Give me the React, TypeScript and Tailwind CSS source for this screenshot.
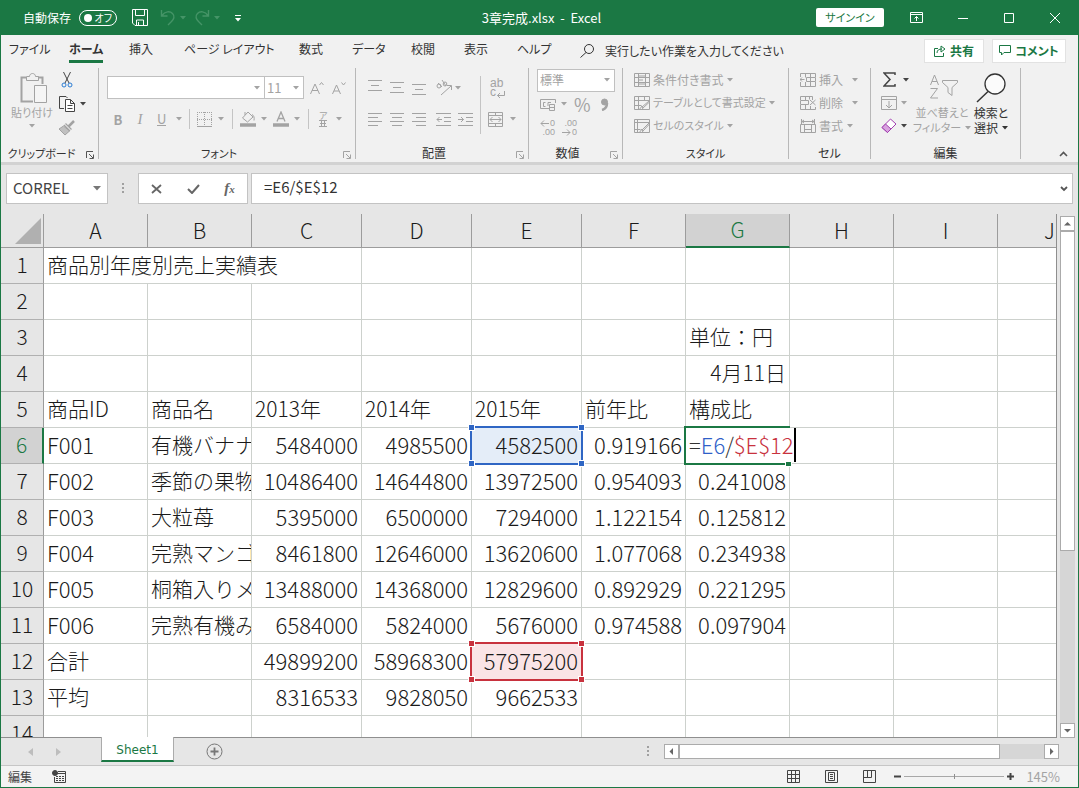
import { Fragment, type ReactNode } from "react";
import clsx from "clsx";

type IconProps = { w?: number; h?: number; className?: string; children: ReactNode };

function Icon({ w = 16, h = 16, className, children }: IconProps) {
  return (
    <svg
      width={w}
      height={h}
      viewBox={`0 0 ${w} ${h}`}
      fill="none"
      stroke="currentColor"
      className={clsx("shrink-0", className)}
      aria-hidden
    >
      {children}
    </svg>
  );
}

function Caret({ className }: { className?: string }) {
  return (
    <Icon w={6} h={4} className={className}>
      <path d="M0 0h6L3 3.5z" fill="currentColor" stroke="none" />
    </Icon>
  );
}

function Launcher({ className }: { className?: string }) {
  return (
    <button type="button" aria-label="詳細" className={clsx("absolute right-1 bottom-0", className)}>
      <Icon w={8} h={8}>
        <path d="M.5 7V.5H7M3 3l4 4M7.5 3.5v4h-4" />
      </Icon>
    </button>
  );
}

function Sep({ className }: { className?: string }) {
  return <span className={clsx("w-px bg-[#c4c4c4]", className)} />;
}

const tabs = [
  { label: "ファイル", width: "w-[60px]" },
  { label: "ホーム", width: "w-[60px]", active: true },
  { label: "挿入", width: "w-[55px]" },
  { label: "ページ レイアウト", width: "w-[115px]" },
  { label: "数式", width: "w-[53px]" },
  { label: "データ", width: "w-[59px]" },
  { label: "校閲", width: "w-[53px]" },
  { label: "表示", width: "w-[53px]" },
  { label: "ヘルプ", width: "w-[63px]" },
];

function TitleBar() {
  return (
    <header className="flex h-[35px] shrink-0 items-center bg-[#1b7844] text-xs text-white">
      <div className="flex flex-1 basis-0 items-center pl-[22px]">
        <span>自動保存</span>
        <button
          type="button"
          role="switch"
          aria-checked="false"
          aria-label="自動保存"
          className="ml-2 flex h-4 w-[38px] items-center justify-between rounded-full border border-white pr-1 pl-1 text-[10px] leading-none"
        >
          <span className="size-2 rounded-full bg-white" />
          オフ
        </button>
        <button type="button" aria-label="上書き保存" className="ml-[15px]">
          <Icon w={16} h={17}>
            <path d="M.5.5h15v16H3L.5 14zM3.5.5v6h9v-6M4.5 16v-5h7v5M6.5 13v3" />
          </Icon>
        </button>
        <button type="button" aria-label="元に戻す" className="ml-3 flex items-center gap-1 text-[#459467]">
          <Icon w={16} h={17}>
            <path d="M1.500 1v6h6M2 6.500C5 2 10 2 12.500 4.500c3 3 1 6-1 8L8 16" strokeWidth="1.400" />
          </Icon>
          <Caret />
        </button>
        <button type="button" aria-label="やり直し" className="ml-2 flex items-center gap-1 text-[#459467]">
          <Icon w={16} h={17}>
            <path d="M14.500 1v6h-6M14 6.500C11 2 6 2 3.500 4.500c-3 3-1 6 1 8L8 16" strokeWidth="1.400" />
          </Icon>
          <Caret />
        </button>
        <button type="button" aria-label="クイック アクセス ツール バー" className="ml-[15px]">
          <Icon w={6} h={8}>
            <path d="M0 1.500h6" />
            <path d="M0 4h6L3 7.500z" fill="currentColor" stroke="none" />
          </Icon>
        </button>
      </div>
      <h1 className="text-[13px] whitespace-pre">3章完成.xlsx  -  Excel</h1>
      <div className="flex flex-1 basis-0 items-center justify-end pr-[18px]">
        <button type="button" className="h-[19px] w-[68px] rounded-xs bg-white text-[11px] leading-none text-[#1b7844]">
          サインイン
        </button>
        <button type="button" aria-label="リボンの表示オプション" className="ml-[26px]">
          <Icon w={13} h={11}>
            <path d="M.5.5h12v10H.5zM.5 2.500h12M6.500 9V4.500M4.500 6.500l2-2 2 2" />
          </Icon>
        </button>
        <button type="button" aria-label="最小化" className="ml-[35px]">
          <Icon w={10} h={10}>
            <path d="M0 5.500h10" />
          </Icon>
        </button>
        <button type="button" aria-label="最大化" className="ml-9">
          <Icon w={10} h={10}>
            <path d="M.5.5h9v9h-9z" />
          </Icon>
        </button>
        <button type="button" aria-label="閉じる" className="ml-9">
          <Icon w={10} h={10}>
            <path d="M0 0l10 10M10 0L0 10" />
          </Icon>
        </button>
      </div>
    </header>
  );
}

function MenuTabs() {
  return (
    <nav className="flex h-[31px] shrink-0 items-center pr-3 pl-2 text-xs text-[#333]">
      {tabs.map((tab) => (
        <div key={tab.label} className={clsx("flex shrink-0", tab.width)}>
          <button
            type="button"
            className={clsx(
              "h-6 border-b-3 whitespace-nowrap",
              tab.active ? "border-[#1b7844] font-bold" : "border-transparent",
            )}
          >
            {tab.label}
          </button>
        </div>
      ))}
      <label className="flex flex-1 items-center gap-[11px]">
        <Icon w={14} h={14}>
          <circle cx="9" cy="5" r="4.500" />
          <path d="M6 8.500L.5 13.500" />
        </Icon>
        <input
          className="w-full min-w-0 outline-none placeholder:text-[#333]"
          placeholder="実行したい作業を入力してください"
        />
      </label>
      <button
        type="button"
        className="flex h-6 w-[60px] items-center justify-center gap-1 border border-[#e2e2e2] bg-white text-xs font-bold text-[#1b7844]"
      >
        <Icon w={12} h={12}>
          <path d="M4 3.500H.5v8h9V8M3 8c0-3 2-4 5-4M7 1l4 3-4 3z" />
        </Icon>
        共有
      </button>
      <button
        type="button"
        className="ml-2 flex h-6 w-[74px] items-center justify-center gap-1 border border-[#e2e2e2] bg-white text-xs font-bold text-[#1b7844]"
      >
        <Icon w={12} h={11}>
          <path d="M.5.5h11v7H5L2.500 10V7.500h-2z" />
        </Icon>
        コメント
      </button>
    </nav>
  );
}

type GroupProps = { label: string; width: string; small?: boolean; launcher?: string; children: ReactNode };

function Group({ label, width, small, launcher, children }: GroupProps) {
  return (
    <section
      className={clsx("relative flex h-[91px] shrink-0 flex-col border-r border-[#b8b8b8] text-[#a3a3a3]", width)}
    >
      <div className="flex h-[79px] items-start">{children}</div>
      <h2
        className={clsx(
          "text-center leading-3 text-[#333]",
          small ? "text-[11px]" : "text-xs",
          launcher && "pr-4",
        )}
      >
        {label}
      </h2>
      {launcher && <Launcher className={launcher} />}
    </section>
  );
}

function ToolButton({ label, className, children }: { label: string; className?: string; children: ReactNode }) {
  return (
    <button type="button" aria-label={label} className={clsx("flex shrink-0 items-center gap-1", className)}>
      {children}
    </button>
  );
}

const alignPaths = {
  top: "M0 1.500h14M3 6.500h8M0 11.500h14",
  left: "M0 1.500h14M0 5.500h10M0 9.500h14M0 13.500h10",
  center: "M0 1.500h14M2 5.500h10M0 9.500h14M2 13.500h10",
  right: "M0 1.500h14M4 5.500h10M0 9.500h14M4 13.500h10",
};

function ClipboardGroup() {
  return (
    <Group label="クリップボード" width="w-[98px]" small launcher="text-[#555]">
      <button type="button" className="ml-[7px] flex w-12 flex-col items-center pt-[5px] text-[11px] leading-4">
        <Icon w={28} h={31} className="ml-1">
          <path d="M6 4.500H1.500v24H13M18 4.500h4.500V11" strokeWidth="2" />
          <path d="M6.500 7.500v-4h3c0-4 6-4 6 0h3v4z" />
          <path d="M14.500 12.500h12v17h-12z" fill="#f5f5f5" />
        </Icon>
        貼り付け
        <Caret className="mt-1" />
      </button>
      <div className="flex flex-col text-[#444]">
        <ToolButton label="切り取り" className="h-6 pl-[5px]">
          <Icon w={12} h={16}>
            <path d="M2.500 0L8 11M9.500 0L4 11" />
            <circle cx="3" cy="13" r="2" stroke="#2b7cd3" />
            <circle cx="9" cy="13" r="2" stroke="#2b7cd3" />
          </Icon>
        </ToolButton>
        <ToolButton label="コピー" className="h-6 pl-[3px]">
          <Icon w={16} h={16}>
            <path d="M5 12.500H.5V.5H7L8.500 2" />
            <path d="M6.500 3.500h5l4 4v8h-9zM11.500 3.500v4h4M8.500 9.500h5M8.500 12.500h5" fill="#fff" />
          </Icon>
          <Caret className="ml-px" />
        </ToolButton>
        <ToolButton label="書式のコピー" className="h-6 pl-[3px] text-[#a3a3a3]">
          <Icon>
            <path d="M15 1L9.500 6.500" strokeWidth="2.500" />
            <path d="M6.500 3.500l6 6M5 5l6 6" strokeWidth="1.200" />
            <path d="M4.500 6L0 9l6 6 4.500-4z" fill="#c0c0c0" />
          </Icon>
        </ToolButton>
      </div>
    </Group>
  );
}

function FontGroup() {
  return (
    <Group label="フォント" width="w-[257px]" small launcher="text-[#a3a3a3]">
      <div className="flex flex-col pl-2">
        <div className="flex h-[39px] items-center">
          <div className="flex h-[23px] w-[158px] items-center border border-[#c0c0c0] bg-white pr-1">
            <select aria-label="フォント名" className="h-full min-w-0 flex-1 appearance-none outline-none" />
            <Caret />
          </div>
          <div className="-ml-px flex h-[23px] w-10 items-center border border-[#c0c0c0] bg-white pr-1">
            <select
              aria-label="フォント サイズ"
              className="h-full min-w-0 flex-1 appearance-none pl-[2px] text-[13px] leading-none outline-none"
            >
              <option>11</option>
            </select>
            <Caret />
          </div>
          <ToolButton label="フォント サイズの拡大" className="ml-[2px] w-[22px] justify-center">
            <Icon w={14} h={14}>
              <path d="M.5 13L5 3l4.500 10M2 9.500h6M9.500 4l2-2.500 2 2.500" />
            </Icon>
          </ToolButton>
          <ToolButton label="フォント サイズの縮小" className="w-[22px] justify-center">
            <Icon w={14} h={14}>
              <path d="M.5 13L4.500 4l4 9M2 10h5M9.500 1.500l2 2.500 2-2.500" />
            </Icon>
          </ToolButton>
        </div>
        <div className="flex h-6 items-center text-[13px] leading-none">
          <ToolButton label="太字" className="w-[22px] justify-center font-bold">
            B
          </ToolButton>
          <ToolButton label="斜体" className="w-[22px] justify-center [font-family:'Liberation_Serif',serif] text-[15px] italic">
            I
          </ToolButton>
          <ToolButton label="下線" className="w-[30px] gap-[10px] pl-[6px]">
            <span className="border-b border-current">U</span>
            <Caret />
          </ToolButton>
          <Sep className="ml-2 h-5" />
          <ToolButton label="罫線" className="ml-[7px] gap-[6px]">
            <Icon w={15} h={15}>
              <path d="M.5 0v14M7.500 0v14M14.500 0v14M0 .5h15M0 7.500h15" strokeDasharray="1 1" />
              <path d="M0 14.500h15" />
            </Icon>
            <Caret />
          </ToolButton>
          <Sep className="ml-2 h-5" />
          <ToolButton label="塗りつぶしの色" className="ml-[7px]">
            <Icon w={16} h={16}>
              <path d="M8 1L2.500 7l5 4L13 6zM5 4V1M12 3.500c2 1 2.500 3 2 6" />
              <path d="M0 14h16" strokeWidth="3.500" />
            </Icon>
            <Caret className="ml-px" />
          </ToolButton>
          <ToolButton label="フォントの色" className="ml-[6px]">
            <Icon w={16} h={16}>
              <path d="M4 10.500L8 1l4 9.500M5.500 7.500h5" strokeWidth="1.300" />
              <path d="M0 14h16" strokeWidth="3.500" />
            </Icon>
            <Caret className="ml-px" />
          </ToolButton>
          <Sep className="ml-2 h-5" />
          <ToolButton label="ふりがなの表示" className="ml-[10px] gap-[9px]">
            <span className="flex flex-col items-center text-[9px] leading-[9px]">
              <span>ア</span>
              <Icon w={8} h={8}>
                <path d="M0 .5h8M1 3.500h6M0 6.500h8M2.500.5v6M5.500.5v6" />
              </Icon>
            </span>
            <Caret />
          </ToolButton>
        </div>
      </div>
    </Group>
  );
}

function AlignmentGroup() {
  return (
    <Group label="配置" width="w-[173px]" launcher="text-[#a3a3a3]">
      <div className="flex flex-col pl-3">
        <div className="flex h-[39px] items-center gap-2">
          <ToolButton label="上揃え" className="pb-1">
            <Icon w={14} h={13}>
              <path d={alignPaths.top} />
            </Icon>
          </ToolButton>
          <ToolButton label="上下中央揃え">
            <Icon w={14} h={13}>
              <path d={alignPaths.top} />
            </Icon>
          </ToolButton>
          <ToolButton label="下揃え" className="pt-1">
            <Icon w={14} h={13}>
              <path d={alignPaths.top} />
            </Icon>
          </ToolButton>
          <ToolButton label="方向" className="ml-[2px]">
            <Icon w={17} h={16}>
              <ellipse cx="3" cy="6" rx="2" ry="2" />
              <path d="M2 3l4 4M6 0l4 6" />
              <ellipse cx="9" cy="4" rx="1.800" ry="2" />
              <path d="M5 15L15 6M11 5.500h4.500V10" />
            </Icon>
            <Caret className="-ml-[2px]" />
          </ToolButton>
        </div>
        <div className="flex h-6 items-center gap-2">
          {(["left", "center", "right"] as const).map((side) => (
            <ToolButton key={side} label={`${side}揃え`}>
              <Icon w={14} h={15}>
                <path d={alignPaths[side]} />
              </Icon>
            </ToolButton>
          ))}
          <ToolButton label="インデントを減らす" className="ml-[2px]">
            <Icon w={15} h={15}>
              <path d="M0 1.500h15M8 5.500h7M8 9.500h7M0 13.500h15M6 7.500H1M3.500 5L1 7.500 3.500 10" />
            </Icon>
          </ToolButton>
          <ToolButton label="インデントを増やす" className="-ml-px">
            <Icon w={15} h={15}>
              <path d="M0 1.500h15M8 5.500h7M8 9.500h7M0 13.500h15M0 7.500h5.500M3 5l2.500 2.500L3 10" />
            </Icon>
          </ToolButton>
        </div>
      </div>
      <Sep className="mt-2 ml-[7px] h-[58px]" />
      <div className="flex flex-col pl-[7px]">
        <ToolButton label="折り返して全体を表示する" className="h-[39px] pl-[2px]">
          <span className="relative flex flex-col items-start [font-family:'Liberation_Sans',sans-serif] text-[12px] leading-[9px]">
            <span>ab</span>
            <span>c</span>
            <Icon w={9} h={8} className="absolute right-[-2px] bottom-[-2px]">
              <path d="M8.500 0v4.500H1.500M4 2L1.500 4.500 4 7" />
            </Icon>
          </span>
        </ToolButton>
        <ToolButton label="セルを結合して中央揃え" className="h-6 gap-[7px]">
          <Icon w={15} h={15}>
            <path d="M.5.5h14v14H.5zM.5 3.500h14M.5 11.500h14M7.500 0v3M7.500 12v3M2 7.500h11M4.500 5L2 7.500 4.500 10M10.500 5L13 7.500 10.500 10" />
          </Icon>
          <Caret />
        </ToolButton>
      </div>
    </Group>
  );
}

function NumberGroup() {
  return (
    <Group label="数値" width="w-[94px]" launcher="text-[#a3a3a3]">
      <div className="flex flex-col pl-2">
        <div className="flex h-6 items-center">
          <div className="flex h-[23px] w-[78px] items-center border border-[#c0c0c0] bg-white pr-1">
            <select
              aria-label="表示形式"
              className="h-full min-w-0 flex-1 appearance-none pl-[2px] text-xs leading-none outline-none"
            >
              <option>標準</option>
            </select>
            <Caret />
          </div>
        </div>
        <div className="flex h-6 items-center pl-[3px]">
          <ToolButton label="通貨表示形式" className="gap-1">
            <Icon w={16} h={13}>
              <path d="M9 10.500H.5v-9h15V5M5.500 4.500h-2v4h2M8 8V4.500h3" />
              <path d="M9.500 6.500h5v6h-5zM9.500 9.500h5" />
            </Icon>
            <Caret className="ml-px" />
          </ToolButton>
          <ToolButton label="パーセント スタイル" className="ml-[7px] text-lg leading-none">
            %
          </ToolButton>
          <ToolButton label="桁区切りスタイル" className="ml-[9px]">
            <Icon w={9} h={13}>
              <path d="M2 12c4-1 5-3 5-7" strokeWidth="2.500" />
              <circle cx="4.500" cy="4" r="3" fill="currentColor" />
            </Icon>
          </ToolButton>
        </div>
        <div className="flex h-6 items-center gap-[7px] pl-[3px] [font-family:'Liberation_Sans',sans-serif] text-[9px] leading-[9px]">
          <ToolButton label="小数点以下の表示桁数を増やす">
            <span className="flex flex-col items-end">
              <span className="flex items-center gap-px">
                <Icon w={9} h={7}>
                  <path d="M9 3.500H1M4 .5l-3 3 3 3" />
                </Icon>
                0
              </span>
              <span>.00</span>
            </span>
          </ToolButton>
          <ToolButton label="小数点以下の表示桁数を減らす">
            <span className="flex flex-col items-end">
              <span>.00</span>
              <span className="flex items-center gap-px">
                <Icon w={9} h={7}>
                  <path d="M0 3.500h8M5 .5l3 3-3 3" />
                </Icon>
                0
              </span>
            </span>
          </ToolButton>
        </div>
      </div>
    </Group>
  );
}

const styleItems = [
  { label: "条件付き書式", size: "text-xs", icon: "M.5.5h15v13H.5zM.5 4.500h15M.5 9.500h15M4.500.5v13M11.500.5v13M5 3h6M5 7h4M5 11h6" },
  { label: "テーブルとして書式設定", size: "text-[11px]", icon: "M.5.5h15v13H.5zM.5 4.500h15M.5 9.500h7M4.500.5v13M10.500.5v4M15 5l-7 6M15.500 6l-6.500 6M8 10l-3 4h4z" },
  { label: "セルのスタイル", size: "text-[11px]", icon: "M.5.5h15v13H.5zM.5 3.500h15M.5 10.500h6M3.500.5v13M15 4l-7 7M15.500 5l-6.500 7M8 10l-3 4h4z" },
];

const cellItems = [
  { label: "挿入", icon: "M.5 4V.5h15V4M.5 9v4.500h15V9M5.500.5v4M10.500.5v4M5.500 9v4M10.500 9v4M6.500 4.500h9v4h-9zM4.500 6.500H0M2 4.500l-2 2 2 2M10.500 4.500v4", gap: "gap-[9px]" },
  { label: "削除", icon: "M.5 4V.5h12V4M.5 9v4.500h15V11M5.500.5v4M9.500.5v3M5.500 9v4M10.500 10v3M.5 4.500h8v4h-8zM10 4l5.500 5M15.500 4L10 9", gap: "gap-[9px]" },
  { label: "書式", icon: "M1.500 0v5M14.500 0v5M2 2.500h12M4 1L2 2.500 4 4M12 1l2 1.500L12 4M.5 5.500h15v8H.5zM4.500 5.500v8M11.500 5.500v8M4.500 10.500h7", gap: "gap-1" },
];

function StylesGroup() {
  return (
    <Group label="スタイル" width="w-[166px]" small>
      <div className="flex flex-col pl-[11px]">
        {styleItems.map((item) => (
          <button
            key={item.label}
            type="button"
            className={clsx("flex h-[23px] items-center gap-[3px] whitespace-nowrap", item.size)}
          >
            <Icon w={16} h={14}>
              <path d={item.icon} />
            </Icon>
            {item.label}
            <Caret />
          </button>
        ))}
      </div>
    </Group>
  );
}

function CellsGroup() {
  return (
    <Group label="セル" width="w-[82px]">
      <div className="flex flex-col pl-[11px]">
        {cellItems.map((item) => (
          <button key={item.label} type="button" className={clsx("flex h-[23px] items-center text-xs", item.gap)}>
            <span className="flex items-center gap-[3px]">
              <Icon w={16} h={14}>
                <path d={item.icon} />
              </Icon>
              {item.label}
            </span>
            <Caret />
          </button>
        ))}
      </div>
    </Group>
  );
}

function EditingGroup() {
  return (
    <Group label="編集" width="w-[150px]">
      <div className="flex w-[44px] flex-col pl-[10px]">
        <ToolButton label="オート SUM" className="h-[23px] gap-[7px] pl-[2px] text-[#444]">
          <Icon w={13} h={15}>
            <path d="M12 3V1H1l6 6.500L1 14h11v-2" strokeWidth="1.500" />
          </Icon>
          <Caret />
        </ToolButton>
        <ToolButton label="フィル" className="h-[23px]">
          <Icon w={16} h={14}>
            <path d="M.5.5h15v13H.5zM.5 3.500h15M8 5v7M5 9l3 3 3-3" />
          </Icon>
          <Caret />
        </ToolButton>
        <ToolButton label="クリア" className="h-[23px] text-[#444]">
          <Icon w={16} h={16}>
            <path d="M1 9.500L9.500 1l5.500 5-8.500 8.500z" stroke="#a23fb0" fill="#fff" />
            <path d="M1 9.500L4.500 6l5.500 5-3.500 3.500z" stroke="#a23fb0" fill="#d9a3e0" />
          </Icon>
          <Caret />
        </ToolButton>
      </div>
      <button type="button" className="flex w-[54px] flex-col items-center pt-1 text-[11px] leading-[15px] whitespace-nowrap">
        <Icon w={30} h={33} className="ml-1">
          <path d="M1.500 13L5.500 3l4 10M3 9.500h5M1.500 16.500h7L1.500 26h7.500" />
          <path d="M13.500 8.500h15v2l-5.500 5v8l-4-3v-5l-5.500-5z" />
        </Icon>
        並べ替えと
        <span className="flex items-center gap-1">
          フィルター
          <Caret />
        </span>
      </button>
      <button type="button" className="ml-1 flex w-9 flex-col items-center pt-1 text-xs leading-[15px] whitespace-nowrap text-[#333]">
        <Icon w={30} h={33}>
          <circle cx="19" cy="12" r="10" strokeWidth="1.300" fill="#fbfbfb" />
          <path d="M12 19.500L1 30" strokeWidth="1.500" />
        </Icon>
        検索と
        <span className="flex items-center gap-1">
          選択
          <Caret />
        </span>
      </button>
    </Group>
  );
}

function Ribbon() {
  return (
    <div className="flex h-24 shrink-0 items-start pt-[2px]">
      <ClipboardGroup />
      <FontGroup />
      <AlignmentGroup />
      <NumberGroup />
      <StylesGroup />
      <CellsGroup />
      <EditingGroup />
      <button type="button" aria-label="リボンを折りたたむ" className="mr-[10px] ml-auto self-end pb-[5px] text-[#555]">
        <Icon w={9} h={6}>
          <path d="M1 5l3.500-3.500L8 5" strokeWidth="1.600" />
        </Icon>
      </button>
    </div>
  );
}

function FormulaBar() {
  return (
    <div className="flex h-[52px] shrink-0 items-start border-t-3 border-[#d2d2d2] bg-[#e6e6e6] pt-2 pr-[5px] pl-[5px]">
      <div className="flex h-[31px] w-[102px] items-center border border-[#c3c3c3] bg-white pr-[6px]">
        <input
          aria-label="名前ボックス"
          defaultValue="CORREL"
          className="w-full min-w-0 flex-1 pl-[6px] text-[15px] text-[#444] outline-none"
        />
        <Icon w={8} h={5} className="text-[#777]">
          <path d="M0 0h8L4 4.500z" fill="currentColor" stroke="none" />
        </Icon>
      </div>
      <div className="flex h-[31px] w-[30px] items-center justify-center text-[#a0a0a0]">
        <Icon w={2} h={11}>
          <path d="M1 0v11" strokeWidth="2" strokeDasharray="2 2" />
        </Icon>
      </div>
      <div className="flex h-[31px] w-[110px] items-center justify-around border border-[#c3c3c3] bg-white text-[#666]">
        <ToolButton label="キャンセル">
          <Icon w={11} h={10}>
            <path d="M1 1l9 8M10 1L1 9" strokeWidth="1.800" />
          </Icon>
        </ToolButton>
        <ToolButton label="入力">
          <Icon w={13} h={10}>
            <path d="M1 5l4 4 7-8" strokeWidth="2" />
          </Icon>
        </ToolButton>
        <ToolButton label="関数の挿入">
          <span className="[font-family:'Liberation_Serif',serif] text-[15px] leading-none font-bold italic">
            f<span className="text-[11px]">x</span>
          </span>
        </ToolButton>
      </div>
      <div className="ml-[3px] flex h-[31px] flex-1 items-center border border-[#c3c3c3] bg-white pr-1">
        <input
          aria-label="数式バー"
          defaultValue="=E6/$E$12"
          className="min-w-0 flex-1 pb-[2px] pl-3 text-[15px] text-[#333] outline-none"
        />
        <Icon w={8} h={6} className="text-[#555]">
          <path d="M1 1l3 3 3-3" strokeWidth="1.800" />
        </Icon>
      </div>
    </div>
  );
}

const columns = [
  { name: "A", width: "w-[104px]" },
  { name: "B", width: "w-[104px]" },
  { name: "C", width: "w-[110px]" },
  { name: "D", width: "w-[110px]" },
  { name: "E", width: "w-[110px]" },
  { name: "F", width: "w-[104px]" },
  { name: "G", width: "w-[104px]" },
  { name: "H", width: "w-[104px]" },
  { name: "I", width: "w-[104px]" },
  { name: "J", width: "w-[104px]" },
];

const rows: string[][] = [
  ["商品別年度別売上実績表"],
  [],
  ["", "", "", "", "", "", "単位：円"],
  ["", "", "", "", "", "", "4月11日"],
  ["商品ID", "商品名", "2013年", "2014年", "2015年", "前年比", "構成比"],
  ["F001", "有機バナナ", "5484000", "4985500", "4582500", "0.919166"],
  ["F002", "季節の果物", "10486400", "14644800", "13972500", "0.954093", "0.241008"],
  ["F003", "大粒苺", "5395000", "6500000", "7294000", "1.122154", "0.125812"],
  ["F004", "完熟マンゴ", "8461800", "12646000", "13620600", "1.077068", "0.234938"],
  ["F005", "桐箱入りメ", "13488000", "14368000", "12829600", "0.892929", "0.221295"],
  ["F006", "完熟有機み", "6584000", "5824000", "5676000", "0.974588", "0.097904"],
  ["合計", "", "49899200", "58968300", "57975200"],
  ["平均", "", "8316533", "9828050", "9662533"],
  [],
];

const isRight = (value: string) => /^[\d.]+$/.test(value) || value.endsWith("日");
const isLatin = (value: string) => /^[\dF.]+$/.test(value);

function RangeFrame({ tone }: { tone: "blue" | "red" }) {
  const square = clsx("absolute size-[5px] outline outline-white", tone === "blue" ? "bg-[#2f66c4]" : "bg-[#c8323e]");
  return (
    <span
      className={clsx(
        "pointer-events-none absolute -top-[2px] -right-[2px] -bottom-[2px] -left-[2px] border-2",
        tone === "blue" ? "border-[#2f66c4]" : "border-[#c8323e]",
      )}
    >
      <span className={clsx(square, "-top-[3px] -left-[3px]")} />
      <span className={clsx(square, "-top-[3px] -right-[3px]")} />
      <span className={clsx(square, "-bottom-[3px] -left-[3px]")} />
      <span className={clsx(square, "-right-[3px] -bottom-[3px]")} />
    </span>
  );
}

function CellEditor() {
  return (
    <>
      <span className="absolute -top-[2px] -right-px -bottom-[2px] -left-[2px] border-2 border-r-0 border-[#1b7844]" />
      <span className="absolute -right-[2px] -bottom-[3px] size-[5px] bg-[#1b7844] outline outline-white" />
      <div
        role="textbox"
        aria-label="G6"
        className="absolute top-0 bottom-px left-0 z-10 flex w-max items-center border-r-2 border-black bg-white pb-[2px] pl-[3px] text-[22px]"
      >
        <span className="text-[#333]">=</span>
        <span className="text-[#2f5fc8]">E6</span>
        <span className="text-[#333]">/</span>
        <span className="text-[#c8323e]">$E$12</span>
      </div>
    </>
  );
}

function Sheet() {
  return (
    <div className="min-w-0 flex-1 overflow-hidden border-r border-b border-[#8f8f8f] [font-feature-settings:normal]">
      <table className="w-[1101px] table-fixed border-separate border-spacing-0 text-[21px] leading-6 font-light text-[#1a1a1a]">
        <colgroup>
          <col className="w-[43px]" />
          {columns.map((col) => (
            <col key={col.name} className={col.width} />
          ))}
        </colgroup>
        <thead>
          <tr>
            <th className="h-[34px] border-r border-b border-[#9c9c9c] p-0">
              <Icon w={26} h={26} className="ml-[14px] text-[#b0b0b0]">
                <path d="M26 0v26H0z" fill="currentColor" stroke="none" />
              </Icon>
            </th>
            {columns.map((col) => (
              <th
                key={col.name}
                scope="col"
                className={clsx(
                  "h-[34px] border-r px-0 pt-0 pb-[2px] font-light",
                  col.name === "G"
                    ? "border-b-2 border-r-[#9c9c9c] border-b-[#1b7844] bg-[#d2d2d2] text-[#1b7844]"
                    : "border-b border-[#9c9c9c]",
                )}
              >
                {col.name}
              </th>
            ))}
          </tr>
        </thead>
        <tbody>
          {rows.map((cells, r) => {
            const current = r === 5;
            return (
              <tr key={r}>
                <th
                  scope="row"
                  className={clsx(
                    "h-9 border-b border-b-[#b0b0b0] px-0 pt-0 pb-1 font-light",
                    current
                      ? "border-r-2 border-r-[#1b7844] bg-[#d2d2d2] text-[#1b7844]"
                      : "border-r border-r-[#9c9c9c]",
                  )}
                >
                  {r + 1}
                </th>
                {columns.map((col, c) => {
                  if (r === 0 && (c === 1 || c === 2)) return <Fragment key={col.name} />;
                  const value = cells[c] ?? "";
                  const range = c === 4 && (r === 5 || r === 11);
                  const editing = current && c === 6;
                  return (
                    <td
                      key={col.name}
                      colSpan={r === 0 && c === 0 ? 3 : 1}
                      className={clsx(
                        "relative h-9 border-r border-b border-[#cdd1cd] px-[3px] pt-0 pb-[3px] whitespace-nowrap",
                        isRight(value) && "text-right",
                        isLatin(value) && "text-[22px]",
                        range || editing ? "z-10" : "overflow-hidden",
                        range ? (r === 5 ? "bg-[#e4edf8]" : "bg-[#fae4e6]") : "bg-white",
                      )}
                    >
                      {value}
                      {range && <RangeFrame tone={r === 5 ? "blue" : "red"} />}
                      {editing && <CellEditor />}
                    </td>
                  );
                })}
              </tr>
            );
          })}
        </tbody>
      </table>
    </div>
  );
}

function ScrollButton({ label, d }: { label: string; d: string }) {
  return (
    <button
      type="button"
      aria-label={label}
      className="flex size-[15px] shrink-0 items-center justify-center border border-[#ababab] bg-white text-[#666]"
    >
      <Icon w={7} h={7}>
        <path d={d} fill="currentColor" stroke="none" />
      </Icon>
    </button>
  );
}

function VerticalScroll() {
  return (
    <div className="flex w-[21px] shrink-0 flex-col items-center pt-[2px]">
      <ScrollButton label="上へ" d="M0 5.500h7L3.500 2z" />
      <div className="flex w-[15px] flex-1 flex-col bg-[#d6d6d6]">
        <div className="h-[65%] border border-[#ababab] bg-white" />
      </div>
      <ScrollButton label="下へ" d="M0 2h7L3.500 5.500z" />
    </div>
  );
}

function SheetTabs() {
  return (
    <div className="flex h-[27px] shrink-0 items-center pr-[19px]">
      <div className="flex w-[100px] items-center gap-[23px] pl-[27px] text-[#bdbdbd]">
        <button type="button" aria-label="前のシート">
          <Icon w={5} h={8}>
            <path d="M5 0v8L0 4z" fill="currentColor" stroke="none" />
          </Icon>
        </button>
        <button type="button" aria-label="次のシート">
          <Icon w={5} h={8}>
            <path d="M0 0v8l5-4z" fill="currentColor" stroke="none" />
          </Icon>
        </button>
      </div>
      <button
        type="button"
        className="-mt-px h-[25px] w-[73px] self-start border-x border-b-2 border-x-[#ababab] border-b-[#1b7844] bg-white pt-[3px] [font-family:'DejaVu_Sans',sans-serif] text-xs text-[#1b7844]"
      >
        Sheet1
      </button>
      <button type="button" aria-label="新しいシート" className="ml-8 text-[#777]">
        <Icon w={17} h={17}>
          <circle cx="8.500" cy="8.500" r="7.500" />
          <path d="M4.500 8.500h8M8.500 4.500v8" strokeWidth="1.800" />
        </Icon>
      </button>
      <div className="ml-auto flex w-[412px] items-center">
        <Icon w={2} h={11} className="mr-[15px] text-[#a0a0a0]">
          <path d="M1 0v11" strokeWidth="2" strokeDasharray="2 2" />
        </Icon>
        <ScrollButton label="左へ" d="M5 0v7L1.500 3.500z" />
        <div className="flex h-[15px] flex-1 bg-[#d6d6d6]">
          <div className="w-[88%] border border-[#ababab] bg-white" />
        </div>
        <ScrollButton label="右へ" d="M2 0v7l3.500-3.500z" />
      </div>
    </div>
  );
}

function StatusBar() {
  return (
    <footer className="flex h-[22px] shrink-0 items-center border-t border-[#c6c6c6] bg-[#f3f3f3] pr-[18px] pl-[7px] text-xs text-[#444]">
      <span>編集</span>
      <button type="button" aria-label="マクロの記録" className="ml-5">
        <Icon w={14} h={13}>
          <path d="M6 1.500h7.500v11h-11V7M2 3.500h12" />
          <path d="M4 6.500h8M4 8.500h8M4 10.500h8" strokeDasharray="2 1" />
          <circle cx="3" cy="3" r="2.500" fill="currentColor" />
        </Icon>
      </button>
      <div className="ml-auto flex items-center gap-[25px]">
        <button type="button" aria-label="標準">
          <Icon w={13} h={13}>
            <path d="M.5.5h12v12H.5zM4.500.5v12M8.500.5v12M.5 4.500h12M.5 8.500h12" />
          </Icon>
        </button>
        <button type="button" aria-label="ページ レイアウト">
          <Icon w={13} h={13}>
            <path d="M.5.5h12v12H.5zM3.500 2.500h6v8h-6zM5 4.500h3M5 6.500h3M5 8.500h3" />
          </Icon>
        </button>
        <button type="button" aria-label="改ページ プレビュー">
          <Icon w={13} h={13}>
            <path d="M.5.5h12v12H.5zM4.500.5v7M8.500.5v7M.5 7.500h8" />
          </Icon>
        </button>
      </div>
      <button type="button" aria-label="縮小" className="ml-[18px]">
        <Icon w={7} h={7}>
          <path d="M0 3.500h7" strokeWidth="2" />
        </Icon>
      </button>
      <input
        type="range"
        aria-label="ズーム"
        defaultValue={50}
        className="mx-[3px] h-px w-[100px] appearance-none bg-[#a8a8a8] [&::-webkit-slider-thumb]:h-[5px] [&::-webkit-slider-thumb]:w-px [&::-webkit-slider-thumb]:appearance-none [&::-webkit-slider-thumb]:bg-[#8f8f8f]"
      />
      <button type="button" aria-label="拡大">
        <Icon w={7} h={7}>
          <path d="M0 3.500h7M3.500 0v7" strokeWidth="2" />
        </Icon>
      </button>
      <span className="ml-3 text-[13px] text-[#a3a3a3]">145%</span>
    </footer>
  );
}

export default function App() {
  return (
    <div className="flex h-screen flex-col overflow-hidden border-x border-b border-[#1b7844] bg-[#f1f1f1] [font-family:'Noto_Sans_CJK_JP','Noto_Sans',sans-serif] [font-feature-settings:'palt']">
      <TitleBar />
      <MenuTabs />
      <Ribbon />
      <FormulaBar />
      <main className="flex min-h-0 flex-1 flex-col bg-[#e6e6e6]">
        <div className="flex min-h-0 flex-1">
          <Sheet />
          <VerticalScroll />
        </div>
        <SheetTabs />
      </main>
      <StatusBar />
    </div>
  );
}
